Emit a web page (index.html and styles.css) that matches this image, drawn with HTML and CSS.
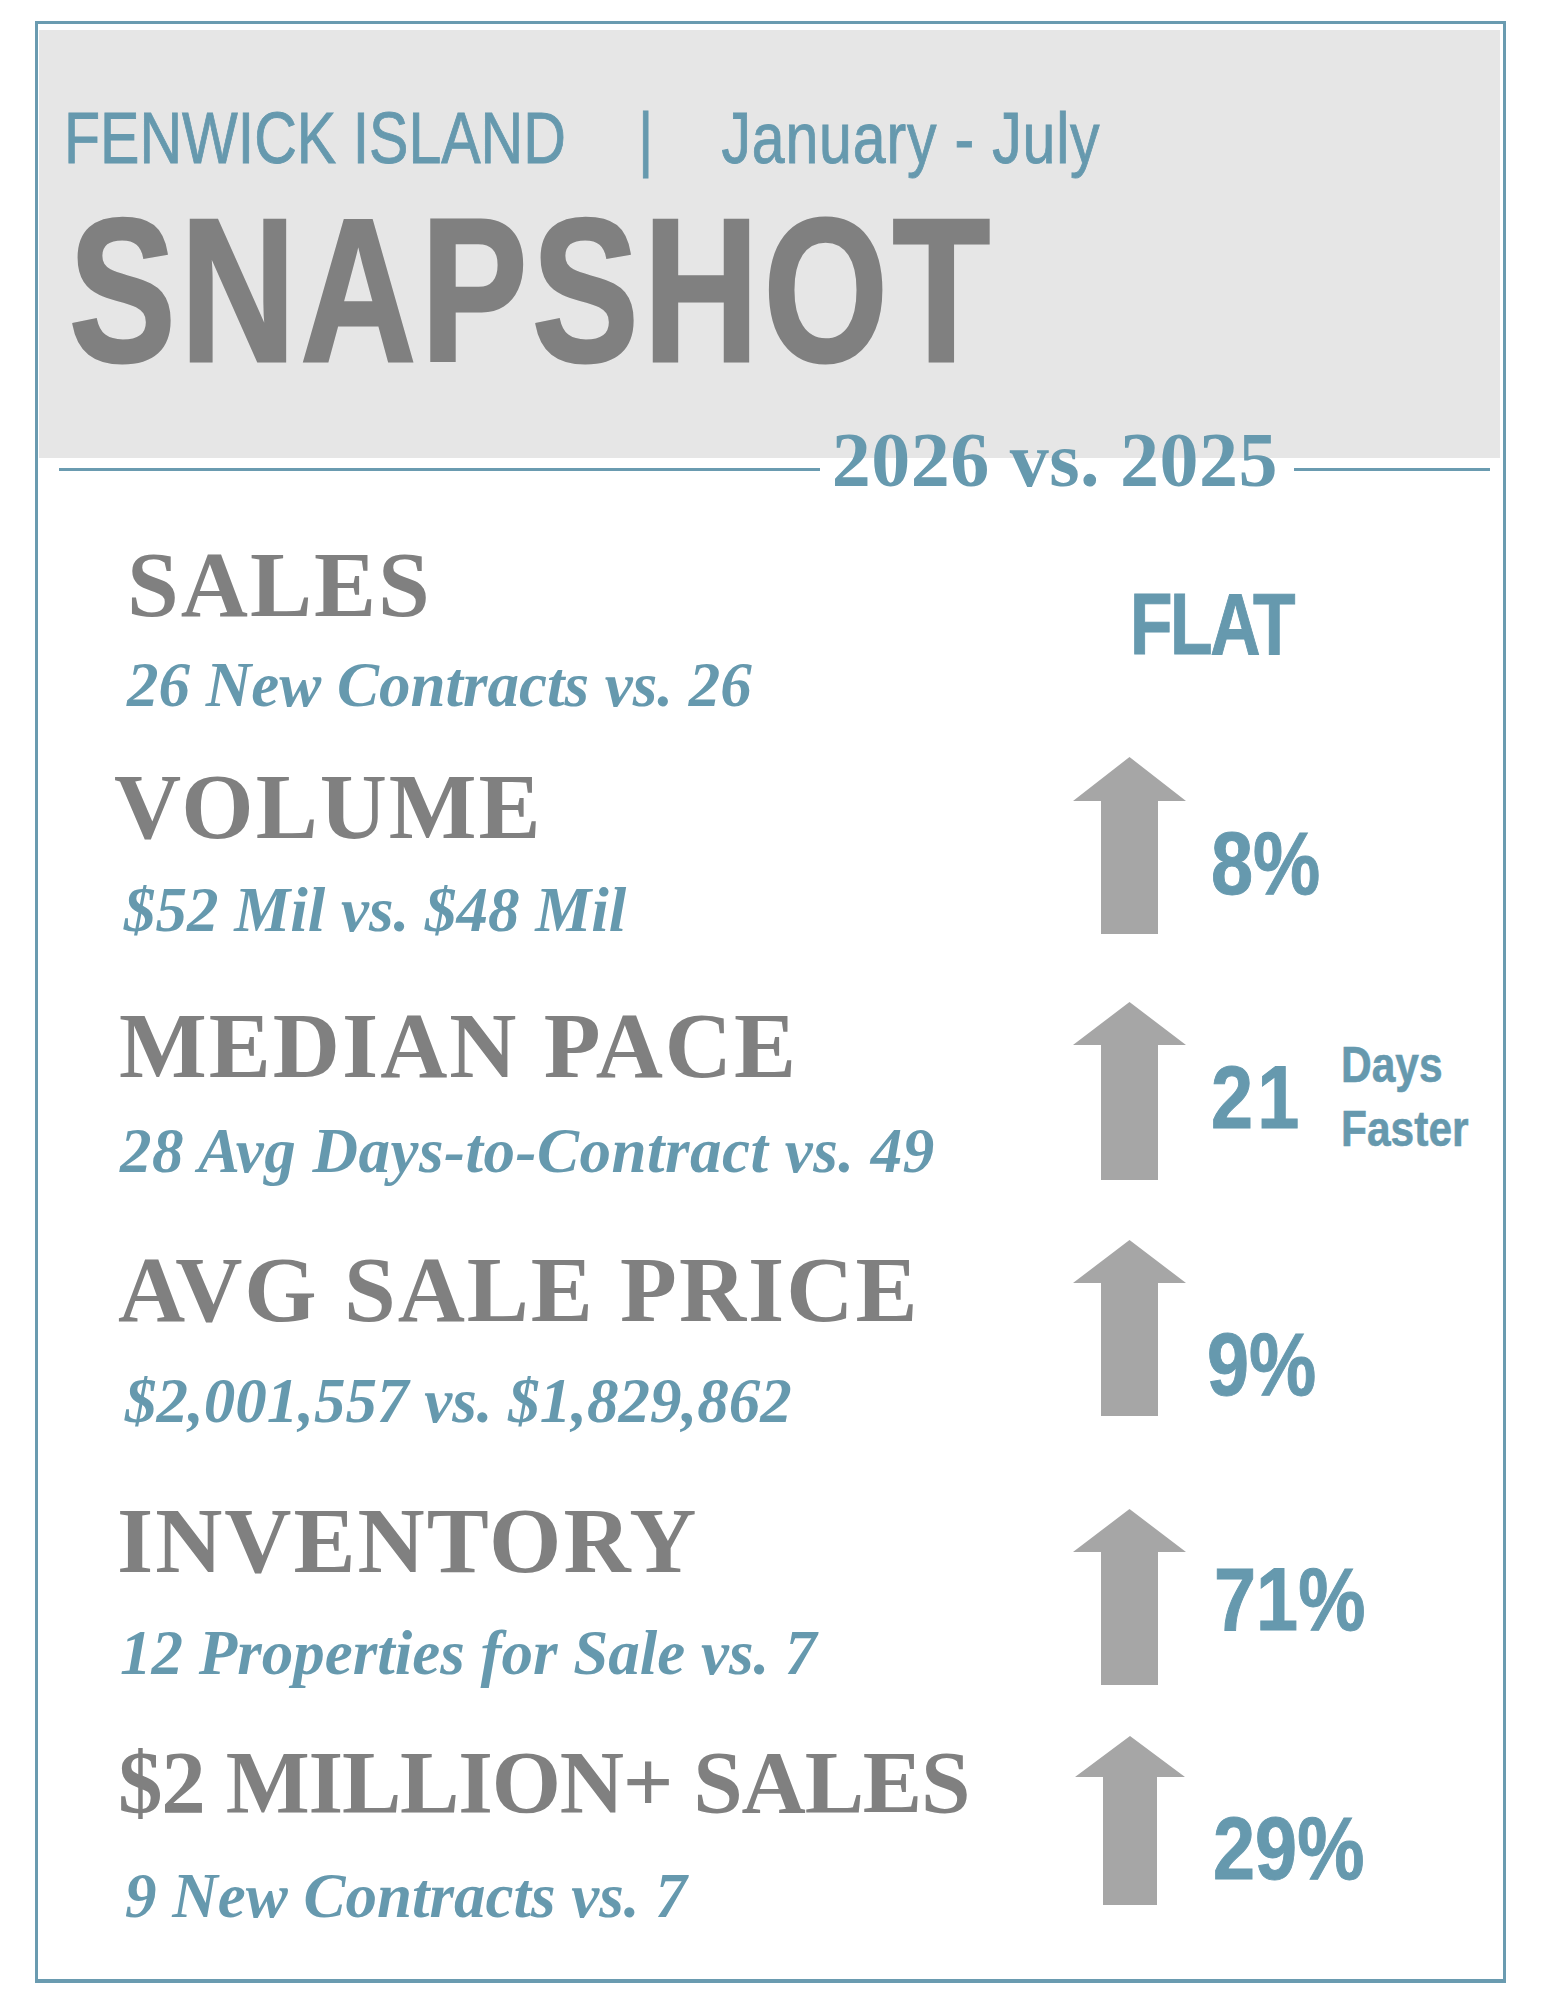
FILE: index.html
```html
<!DOCTYPE html>
<html lang="en">
<head>
<meta charset="utf-8">
<title>Fenwick Island Snapshot</title>
<link rel="stylesheet" href="styles.css">
</head>
<body>
<div class="card">
  <header class="header">
    <div class="place"><span>FENWICK ISLAND</span><span class="sep">|</span><span class="period">January - July</span></div>
    <h1 class="snapshot">SNAPSHOT</h1>
  </header>

  <div class="divider">
    <span class="rule rule-left"></span>
    <span class="years">2026 vs. 2025</span>
    <span class="rule rule-right"></span>
  </div>

  <section class="row row-sales">
    <div class="row-text">
      <div class="title">SALES</div>
      <div class="sub">26 New Contracts vs. 26</div>
    </div>
    <div class="stat">
      <div class="flat">FLAT</div>
    </div>
  </section>

  <section class="row row-volume">
    <div class="row-text">
      <div class="title">VOLUME</div>
      <div class="sub">$52 Mil vs. $48 Mil</div>
    </div>
    <div class="stat">
      <svg class="arrow" width="113" height="177" viewBox="0 0 113 177"><polygon points="56.5,0 113,44 85,44 85,177 28,177 28,44 0,44"/></svg>
      <div class="value">8%</div>
    </div>
  </section>

  <section class="row row-pace">
    <div class="row-text">
      <div class="title">MEDIAN PACE</div>
      <div class="sub">28 Avg Days-to-Contract vs. 49</div>
    </div>
    <div class="stat">
      <svg class="arrow" width="113" height="178" viewBox="0 0 113 178"><polygon points="56.5,0 113,43 85,43 85,178 28,178 28,43 0,43"/></svg>
      <div class="value">21</div>
      <div class="unit">Days<br>Faster</div>
    </div>
  </section>

  <section class="row row-price">
    <div class="row-text">
      <div class="title">AVG SALE PRICE</div>
      <div class="sub">$2,001,557 vs. $1,829,862</div>
    </div>
    <div class="stat">
      <svg class="arrow" width="113" height="176" viewBox="0 0 113 176"><polygon points="56.5,0 113,43 85,43 85,176 28,176 28,43 0,43"/></svg>
      <div class="value">9%</div>
    </div>
  </section>

  <section class="row row-inventory">
    <div class="row-text">
      <div class="title">INVENTORY</div>
      <div class="sub">12 Properties for Sale vs. 7</div>
    </div>
    <div class="stat">
      <svg class="arrow" width="113" height="176" viewBox="0 0 113 176"><polygon points="56.5,0 113,43 85,43 85,176 28,176 28,43 0,43"/></svg>
      <div class="value">71%</div>
    </div>
  </section>

  <section class="row row-million">
    <div class="row-text">
      <div class="title">$2 MILLION+ SALES</div>
      <div class="sub">9 New Contracts vs. 7</div>
    </div>
    <div class="stat">
      <svg class="arrow" width="110" height="169" viewBox="0 0 110 169"><polygon points="55,0 110,41 82,41 82,169 28,169 28,41 0,41"/></svg>
      <div class="value">29%</div>
    </div>
  </section>
</div>
</body>
</html>
```

FILE: styles.css
```css
* { box-sizing: border-box; }

html, body {
  margin: 0;
  padding: 0;
  background: #ffffff;
}

body {
  padding: 21px 0 0 35px;
  font-family: "Liberation Serif", "Times New Roman", serif;
}

.card {
  width: 1471px;
  border: 3px solid #6a9bb0;
  border-bottom-width: 4px;
  padding-bottom: 51px;
  background: #ffffff;
}

/* ---------- header ---------- */
.header {
  margin: 6px 3px 0 1px;
  padding: 72px 0 64px 25px;
  background: #e6e6e6;
}

/* condensed sans: Liberation Sans squeezed horizontally (Arial Narrow look) */
.place {
  display: flex;
  font-family: "Liberation Sans", Arial, sans-serif;
  font-size: 72px;
  line-height: 1;
  height: 72px;
  color: #6699ae;
  -webkit-text-stroke: 0.9px #6699ae;
  white-space: nowrap;
  transform: scaleX(0.82);
  transform-origin: 0 0;
}

.sep { margin-left: 88px; }
.period { margin-left: 83px; letter-spacing: 1px; }

.snapshot {
  margin: 13px 0 0 5px;
  font-family: "Liberation Sans", Arial, sans-serif;
  font-weight: 700;
  font-size: 205px;
  line-height: 1;
  height: 207px;
  color: #808080;
  -webkit-text-stroke: 3px #808080;
  letter-spacing: 6px;
  white-space: nowrap;
  transform: scaleX(0.78);
  transform-origin: 0 0;
}

/* ---------- divider ---------- */
.divider {
  display: flex;
  align-items: flex-start;
  margin-top: -37px;
  padding: 0 13px 0 21px;
  height: 78px;
}

.rule {
  height: 3px;
  margin-top: 47px;
  background: #6a9bb0;
}
.rule-left { flex: 1; }
.rule-right { width: 196px; }

.years {
  margin: 0 16px 0 12px;
  font-family: "Liberation Serif", "Times New Roman", serif;
  font-weight: 700;
  font-size: 78px;
  line-height: 1;
  letter-spacing: 0.5px;
  color: #6699ae;
}

/* ---------- rows ---------- */
.row {
  display: flex;
  align-items: flex-start;
  padding-left: 80px;
}

.row-text {
  flex: none;
  width: 955px;
}

.title {
  font-family: "Liberation Serif", "Times New Roman", serif;
  font-weight: 700;
  font-size: 93px;
  line-height: 1;
  height: 93px;
  letter-spacing: 2px;
  color: #808080;
  white-space: nowrap;
}

.sub {
  margin-left: 6px;
  font-family: "Liberation Serif", "Times New Roman", serif;
  font-weight: 700;
  font-style: italic;
  font-size: 63px;
  line-height: 1;
  height: 63px;
  color: #6699ae;
  white-space: nowrap;
}

.stat {
  display: flex;
  align-items: flex-start;
}

.arrow {
  flex: none;
  display: block;
  fill: #a6a6a6;
}

.value,
.unit,
.flat {
  font-family: "Liberation Sans", Arial, sans-serif;
  font-weight: 700;
  color: #6699ae;
  white-space: nowrap;
  transform: scaleX(0.85);
  transform-origin: 0 0;
}

.value {
  margin-left: 25px;
  font-size: 89px;
  line-height: 1;
  -webkit-text-stroke: 1px #6699ae;
}

.unit {
  margin-left: 21px;
  font-size: 50px;
  line-height: 64px;
  -webkit-text-stroke: 0.6px #6699ae;
}

.flat {
  margin: 42px 0 0 57px;
  font-size: 87px;
  line-height: 1;
  letter-spacing: -3px;
  -webkit-text-stroke: 1px #6699ae;
  transform: scaleX(0.8);
}

/* per-row spacing */
.row-sales { margin-top: 39px; }
.row-sales .title { margin-left: 9px; }
.row-sales .sub { margin-top: 23px; margin-left: 9px; }

.row-volume { margin-top: 43px; }
.row-volume .title { margin-left: -4px; }
.row-volume .sub { margin-top: 26px; }
.row-volume .stat { margin-top: -3px; }
.row-volume .value { margin-top: 62px; }

.row-pace { margin-top: 57px; }
.row-pace .title { margin-left: 1px; }
.row-pace .sub { margin-top: 28px; margin-left: 2px; letter-spacing: 0.5px; }
.row-pace .stat { margin-top: 3px; }
.row-pace .value { margin-top: 51px; letter-spacing: 5px; }
.row-pace .unit { margin-top: 31px; }

.row-price { margin-top: 60px; }
.row-price .sub { margin-top: 34px; margin-left: 7px; }
.row-price .stat { margin-top: -3px; }
.row-price .value { margin-top: 80px; margin-left: 21px; }

.row-inventory { margin-top: 61px; }
.row-inventory .title { margin-left: -1px; }
.row-inventory .sub { margin-top: 35px; margin-left: 2px; }
.row-inventory .stat { margin-top: 15px; }
.row-inventory .value { margin-top: 46px; margin-left: 28px; }

.row-million { margin-top: 53px; }
.row-million .title { margin-left: 0; font-size: 89px; height: 89px; letter-spacing: -1.2px; }
.row-million .sub { margin-top: 38px; margin-left: 7px; }
.row-million .stat { margin-top: -2px; padding-left: 2px; }
.row-million .value { margin-top: 68px; margin-left: 28px; }
```
